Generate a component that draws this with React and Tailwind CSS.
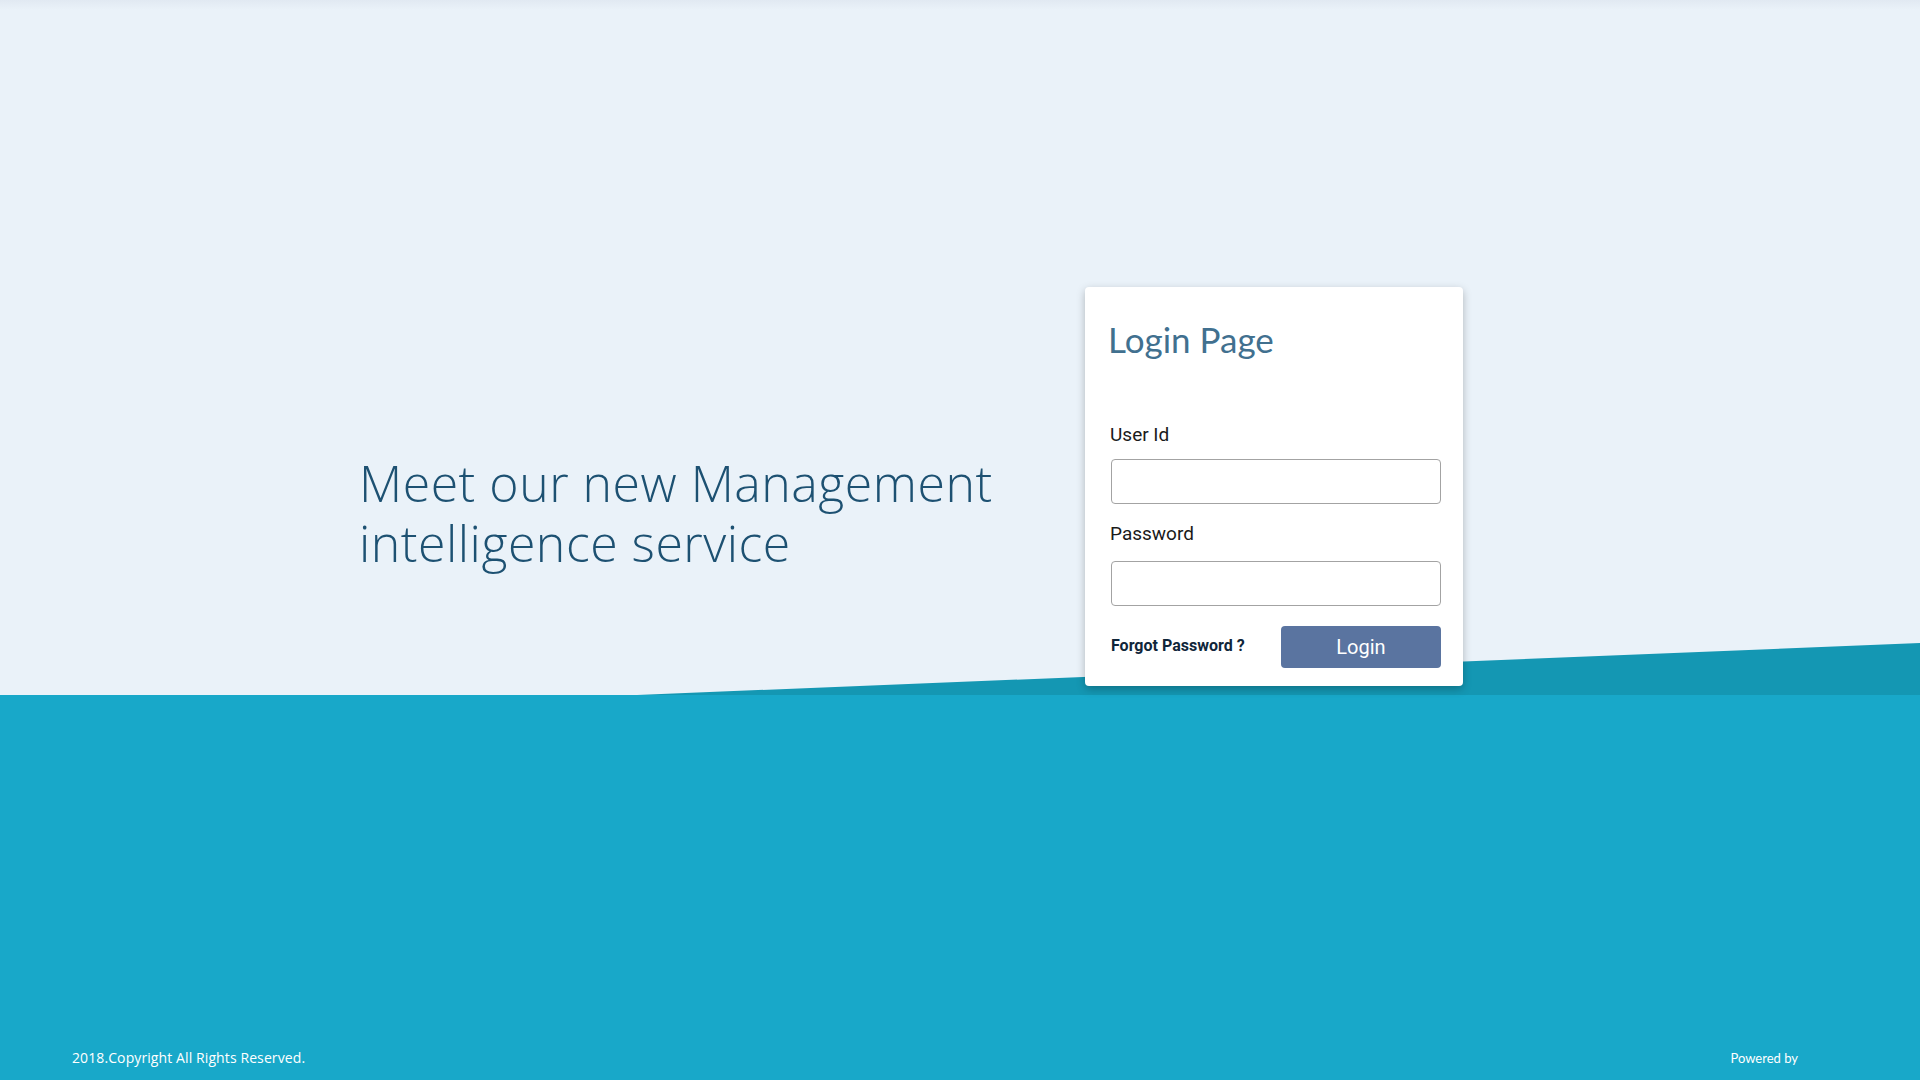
export default function App() {
  return (
    <div className="relative flex h-screen w-full flex-col overflow-hidden bg-[#18a8c9]">
      {/* Top area */}
      <section className="relative h-[695px] w-full shrink-0 bg-[#eaf2f9]">
        <div className="absolute inset-x-0 top-0 h-[10px] bg-gradient-to-b from-[#e1e9f2] to-transparent"></div>
        <svg
          className="absolute inset-0 h-full w-full"
          viewBox="0 0 1920 695"
          preserveAspectRatio="none"
        >
          <polygon points="637,695 1920,643 1920,695" fill="#1497b3" />
        </svg>

        <div className="relative flex pl-[359px] pt-[287px]">
          <div className="w-[726px] pt-[166px]">
            <h1 className="font-['Open_Sans',sans-serif] text-[50px] font-light leading-[60px] tracking-[0.5px] text-[#1d5172]">
              Meet our new Management
              <br />
              intelligence service
            </h1>
          </div>

          {/* Login card */}
          <div className="w-[378px] rounded-[4px] bg-white pb-[18px] pl-[26px] pr-[22px] pt-[35px] shadow-[0_3px_8px_rgba(0,0,0,0.25)]">
            <h2 className="-ml-[3px] font-['Lato',sans-serif] text-[35px] leading-none text-[#41708f]">
              Login Page
            </h2>

            <div className="mt-[68px] font-['Roboto',sans-serif]">
              <label className="-ml-px block text-[19px] leading-[19px] text-[#1a1a1a]">User Id</label>
              <input
                type="text"
                className="mt-[15px] block h-[45px] w-[330px] rounded-[4px] border border-[#a3a3a3] bg-white px-3 outline-none"
              />

              <label className="-ml-px mt-[20px] block text-[19px] leading-[19px] text-[#1a1a1a]">Password</label>
              <input
                type="password"
                className="mt-[18px] block h-[45px] w-[330px] rounded-[4px] border border-[#a3a3a3] bg-white px-3 outline-none"
              />

              <div className="mt-[20px] flex w-[330px] items-center justify-between">
                <span className="-mt-[3px] text-[16px] font-bold text-[#10263a]">Forgot Password ?</span>
                <button className="h-[42px] w-[160px] rounded-[4px] bg-[#5a74a0] text-[20px] text-white">
                  Login
                </button>
              </div>
            </div>
          </div>
        </div>
      </section>

      {/* Footer */}
      <footer className="flex flex-1 items-end justify-between pb-[12px] pl-[72px] pr-[122px] font-['Open_Sans',sans-serif] text-white">
        <span className="text-[14px] leading-[20px] tracking-[0.1px]">2018.Copyright All Rights Reserved.</span>
        <span className="font-['Lato',sans-serif] text-[13px] leading-[20px]">Powered by</span>
      </footer>
    </div>
  );
}
